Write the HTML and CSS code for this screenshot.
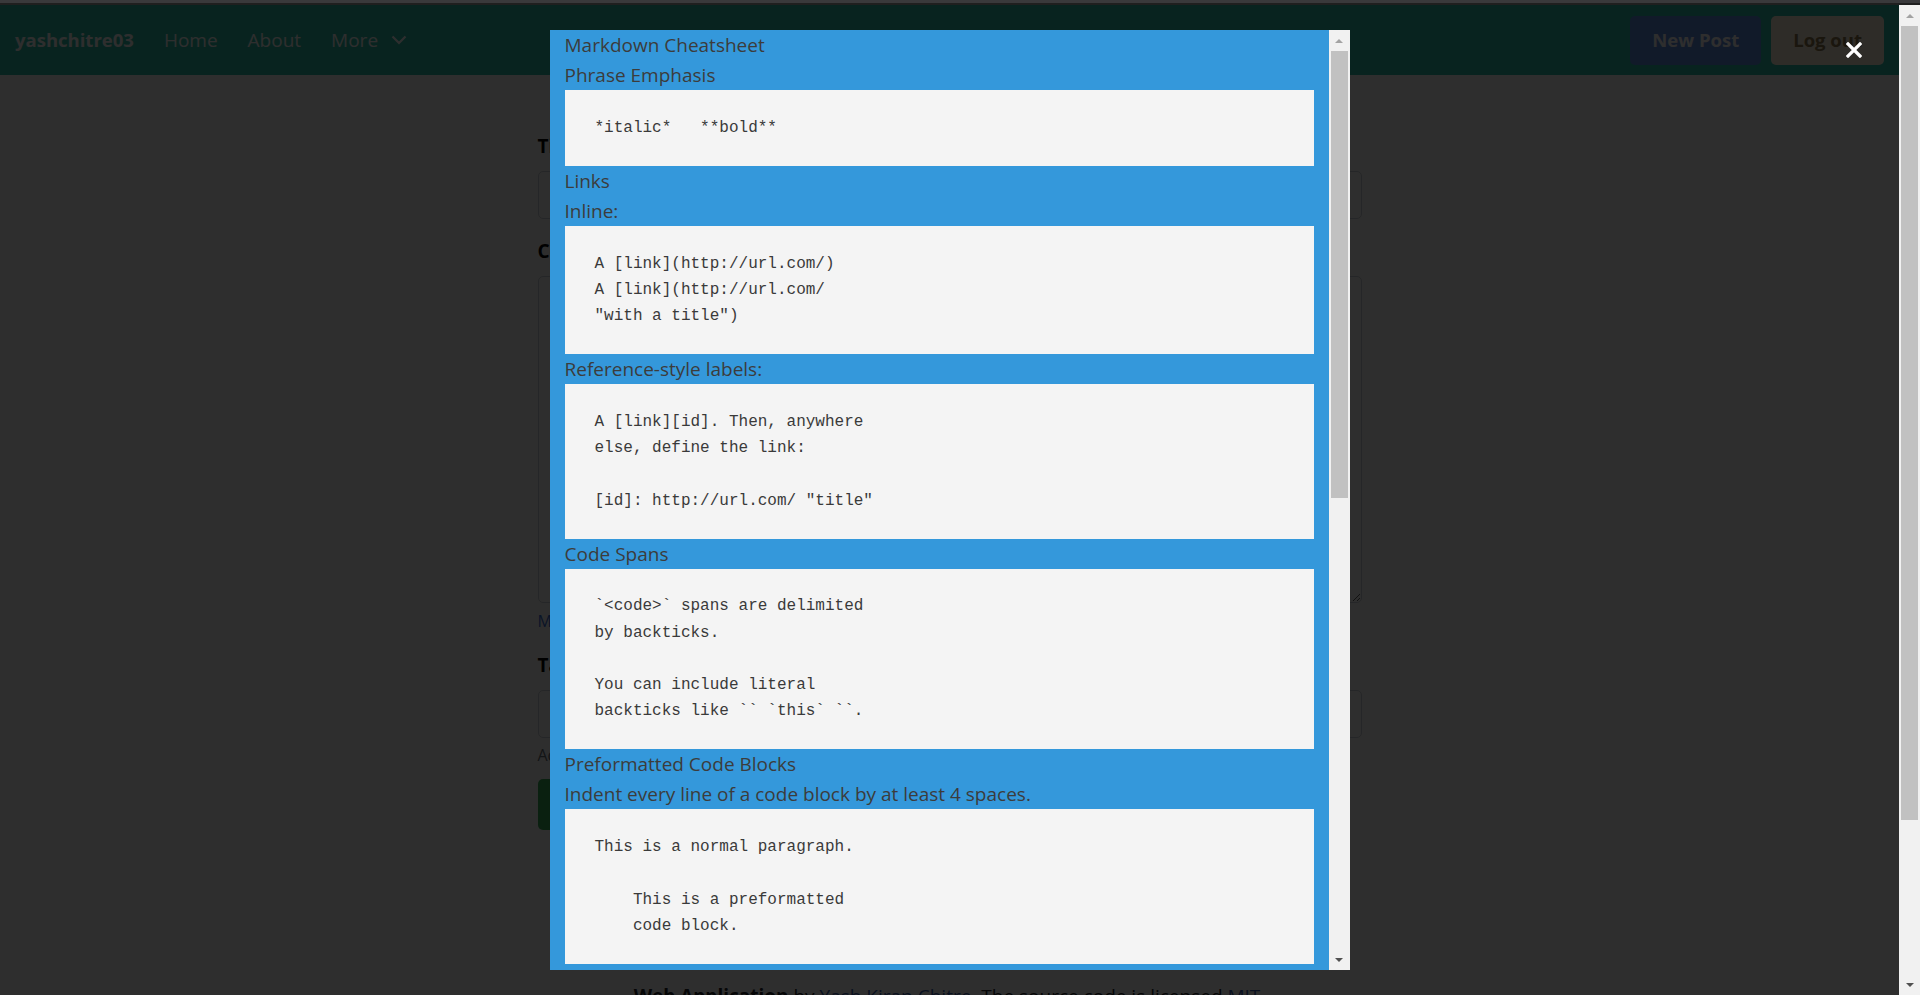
FILE: index.html
```html
<!DOCTYPE html>
<html lang="en">
<head>
<meta charset="utf-8">
<title>New Post</title>
<link rel="stylesheet" href="styles.css">
</head>
<body>
<div class="window-top"></div>
<div class="viewport">
  <div class="page">
    <nav class="navbar">
      <a class="brand" href="#">yashchitre03</a>
      <ul class="nav-links">
        <li><a href="#">Home</a></li>
        <li><a href="#">About</a></li>
        <li><a href="#" class="dropdown">More <svg class="chev" width="16" height="10" viewBox="0 0 16 10"><path d="M1.5 1.5 L8 8 L14.5 1.5" fill="none" stroke="currentColor" stroke-width="2.2"/></svg></a></li>
      </ul>
      <div class="nav-actions">
        <a class="btn btn-new" href="#">New Post</a>
        <a class="btn btn-logout" href="#">Log out</a>
      </div>
    </nav>

    <main class="container">
      <form class="post-form">
        <div class="form-group">
          <label>Title</label>
          <input class="form-control" type="text">
        </div>
        <div class="form-group">
          <label>Content</label>
          <textarea class="form-control content-area"></textarea>
          <small class="form-text link">Markdown Cheatsheet</small>
        </div>
        <div class="form-group tight">
          <label>Tags</label>
          <input class="form-control" type="text">
          <small class="form-text muted">Add tags separated by commas</small>
        </div>
        <button class="btn-submit" type="button">Submit</button>
      </form>
    </main>

    <footer class="footer">
      <p><b>Web Application</b> by <a href="#">Yash Kiran Chitre</a>. The source code is licensed <a href="#">MIT</a>.</p>
    </footer>

    <div class="overlay"></div>

    <button class="close-btn" type="button" aria-label="Close">
      <svg width="16" height="16" viewBox="0 0 16 16"><path d="M2 2 L14 14 M14 2 L2 14" stroke="#fff" stroke-width="3.2" stroke-linecap="square" fill="none"/></svg>
    </button>

    <div class="modal">
      <div class="modal-body">
        <p>Markdown Cheatsheet</p>
        <p>Phrase Emphasis</p>
<pre>*italic*   **bold**</pre>
        <p>Links</p>
        <p>Inline:</p>
<pre>A [link](http://url.com/)
A [link](http://url.com/
"with a title")</pre>
        <p>Reference-style labels:</p>
<pre>A [link][id]. Then, anywhere
else, define the link:

[id]: http://url.com/ "title"</pre>
        <p>Code Spans</p>
<pre>`&lt;code&gt;` spans are delimited
by backticks.

You can include literal
backticks like `` `this` ``.</pre>
        <p>Preformatted Code Blocks</p>
        <p>Indent every line of a code block by at least 4 spaces.</p>
<pre>This is a normal paragraph.

    This is a preformatted
    code block.</pre>
      </div>
      <div class="scrollbar modal-scroll">
        <div class="sb-btn up"></div>
        <div class="sb-track"><div class="sb-thumb"></div></div>
        <div class="sb-btn down"></div>
      </div>
    </div>
  </div>

  <div class="scrollbar page-scroll">
    <div class="sb-btn up"></div>
    <div class="sb-track"><div class="sb-thumb"></div></div>
    <div class="sb-btn down"></div>
  </div>
</div>
</body>
</html>
```

FILE: styles.css
```css
* { box-sizing: border-box; }

html, body { margin: 0; height: 100%; }

body {
  overflow: hidden;
  background: #2e2e2e;
  font-family: "Open Sans", "Noto Sans", sans-serif;
  font-size: 19px;
  line-height: 30px;
  color: #212529;
}

.window-top {
  height: 5px;
  background: #39393b;
  border-bottom: 2px solid #1f1f1f;
}

.viewport {
  display: flex;
  height: 990px;
}

.page {
  flex: 1;
  position: relative;
  overflow: hidden;
  background: #ffffff;
}

/* navbar */
.navbar {
  height: 70px;
  background: #2dc4ae;
  display: flex;
  align-items: center;
  padding: 0 15px;
}

.brand {
  font-weight: 700;
  font-size: 18.5px;
  color: #fff;
  text-decoration: none;
}

.nav-links {
  display: flex;
  list-style: none;
  margin: 0 0 0 30px;
  padding: 0;
  gap: 30px;
}

.nav-links a {
  color: #fff;
  text-decoration: none;
  display: flex;
  align-items: center;
}

.chev { margin-left: 13px; }

.nav-actions {
  margin-left: auto;
  display: flex;
  gap: 10px;
}

.btn {
  height: 49px;
  padding: 0 22px;
  border-radius: 5px;
  font-weight: 700;
  font-size: 18.5px;
  display: flex;
  align-items: center;
  text-decoration: none;
}

.btn-new { background: #5e90e4; color: #fff; }
.btn-logout { background: #fff4de; color: #8f7a50; }

/* form */
.container {
  width: 824px;
  margin: 0 auto;
  padding-top: 56px;
}

.form-group { margin-bottom: 17px; }
.form-group.tight { margin-bottom: 12px; }

.form-group label {
  display: block;
  font-weight: 700;
  margin-bottom: 10px;
  color: #000;
}

.form-control {
  display: block;
  width: 100%;
  height: 48px;
  border: 1px solid #ced4da;
  border-radius: 5px;
  background: #fff;
  font: inherit;
}

.content-area {
  height: 327px;
  resize: vertical;
}

.form-text {
  display: block;
  font-size: 16px;
  line-height: 24px;
  margin-top: 6px;
}

.form-text.link { color: #3b6fd8; }
.form-text.muted { color: #6c757d; margin-top: 5px; }

.btn-submit {
  height: 51px;
  padding: 0 24px;
  border: 0;
  border-radius: 5px;
  background: #3bb35a;
  color: #fff;
  font: inherit;
  font-weight: 700;
}

.footer {
  margin-top: 151px;
  text-align: center;
}

.footer p { margin: 0; }
.footer a { color: #3b5fb0; text-decoration: none; }

/* overlay + modal */
.overlay {
  position: absolute;
  inset: 0;
  background: rgba(0, 0, 0, 0.82);
  z-index: 10;
}

.close-btn {
  position: absolute;
  top: 37px;
  right: 37px;
  width: 16px;
  height: 16px;
  padding: 0;
  border: 0;
  background: none;
  z-index: 30;
  display: flex;
}

.modal {
  position: absolute;
  top: 25px;
  left: calc(50% - 400px);
  width: 800px;
  height: 940px;
  display: flex;
  z-index: 20;
}

.modal-body {
  flex: 1;
  overflow: hidden;
  background: #3498db;
  padding: 0 15px;
  color: #3c3c3c;
}

.modal-body p {
  margin: 0;
  line-height: 30px;
}

.modal-body pre {
  margin: 0;
  padding: 24.75px 30px;
  background: #f4f4f4;
  font-family: "Liberation Mono", "DejaVu Sans Mono", monospace;
  font-size: 16px;
  line-height: 26.25px;
  color: #3a3a3a;
  white-space: pre;
}

/* scrollbars */
.scrollbar {
  width: 21px;
  background: #f1f1f1;
  display: flex;
  flex-direction: column;
  flex-shrink: 0;
}

.sb-btn {
  height: 21px;
  flex-shrink: 0;
  display: flex;
  align-items: center;
  justify-content: center;
}

.sb-btn::after {
  content: "";
  width: 0;
  height: 0;
  border-left: 4px solid transparent;
  border-right: 4px solid transparent;
}

.sb-btn.up::after { border-bottom: 4px solid #a3a3a3; }
.sb-btn.down::after { border-top: 4px solid #505050; }

.sb-track { flex: 1; }

.sb-thumb {
  margin: 0 2px;
  background: #c1c1c1;
}

.modal-scroll .sb-thumb { height: 447px; }
.page-scroll .sb-thumb { height: 794px; }
```
